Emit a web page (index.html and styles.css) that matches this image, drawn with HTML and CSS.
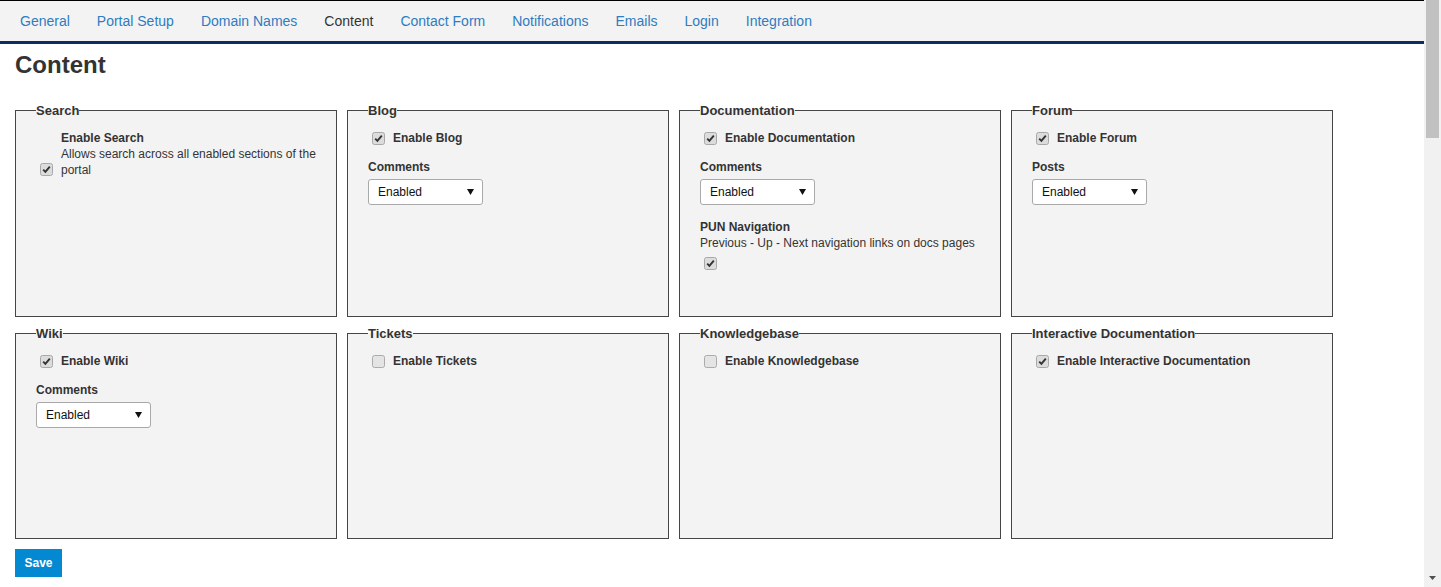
FILE: index.html
```html
<!DOCTYPE html>
<html lang="en">
<head>
<meta charset="utf-8">
<title>Content settings</title>
<link rel="stylesheet" href="styles.css">
</head>
<body>
<div class="screen">
  <div class="page">
    <nav class="tabs">
      <a class="tab">General</a>
      <a class="tab">Portal Setup</a>
      <a class="tab">Domain Names</a>
      <a class="tab active">Content</a>
      <a class="tab">Contact Form</a>
      <a class="tab">Notifications</a>
      <a class="tab">Emails</a>
      <a class="tab">Login</a>
      <a class="tab">Integration</a>
    </nav>
    <h1 class="title">Content</h1>
    <div class="grid">
      <fieldset class="box">
        <legend>Search</legend>
        <div class="row bottom">
          <svg class="cb" width="13" height="13" viewBox="0 0 13 13"><rect x="0.5" y="0.5" width="12" height="12" rx="2" fill="#dcdcdc" stroke="#a8a8a8"/><path d="M3.2 6.6 L5.4 8.9 L9.8 3.6" fill="none" stroke="#333" stroke-width="1.9"/></svg>
          <div class="lbl">
            <div class="strong">Enable Search</div>
            <div>Allows search across all enabled sections of the portal</div>
          </div>
        </div>
      </fieldset>
      <fieldset class="box">
        <legend>Blog</legend>
        <div class="row">
          <svg class="cb" width="13" height="13" viewBox="0 0 13 13"><rect x="0.5" y="0.5" width="12" height="12" rx="2" fill="#dcdcdc" stroke="#a8a8a8"/><path d="M3.2 6.6 L5.4 8.9 L9.8 3.6" fill="none" stroke="#333" stroke-width="1.9"/></svg>
          <span class="lbl strong">Enable Blog</span>
        </div>
        <div class="field-label">Comments</div>
        <div class="select"><span>Enabled</span><svg class="arrow" width="7" height="6" viewBox="0 0 7 6"><path d="M0 0 H7 L3.5 6 Z" fill="#111"/></svg></div>
      </fieldset>
      <fieldset class="box">
        <legend>Documentation</legend>
        <div class="row">
          <svg class="cb" width="13" height="13" viewBox="0 0 13 13"><rect x="0.5" y="0.5" width="12" height="12" rx="2" fill="#dcdcdc" stroke="#a8a8a8"/><path d="M3.2 6.6 L5.4 8.9 L9.8 3.6" fill="none" stroke="#333" stroke-width="1.9"/></svg>
          <span class="lbl strong">Enable Documentation</span>
        </div>
        <div class="field-label">Comments</div>
        <div class="select"><span>Enabled</span><svg class="arrow" width="7" height="6" viewBox="0 0 7 6"><path d="M0 0 H7 L3.5 6 Z" fill="#111"/></svg></div>
        <div class="field-label pun">PUN Navigation</div>
        <div>Previous - Up - Next navigation links on docs pages</div>
        <svg class="cb block" width="13" height="13" viewBox="0 0 13 13"><rect x="0.5" y="0.5" width="12" height="12" rx="2" fill="#dcdcdc" stroke="#a8a8a8"/><path d="M3.2 6.6 L5.4 8.9 L9.8 3.6" fill="none" stroke="#333" stroke-width="1.9"/></svg>
      </fieldset>
      <fieldset class="box">
        <legend>Forum</legend>
        <div class="row">
          <svg class="cb" width="13" height="13" viewBox="0 0 13 13"><rect x="0.5" y="0.5" width="12" height="12" rx="2" fill="#dcdcdc" stroke="#a8a8a8"/><path d="M3.2 6.6 L5.4 8.9 L9.8 3.6" fill="none" stroke="#333" stroke-width="1.9"/></svg>
          <span class="lbl strong">Enable Forum</span>
        </div>
        <div class="field-label">Posts</div>
        <div class="select"><span>Enabled</span><svg class="arrow" width="7" height="6" viewBox="0 0 7 6"><path d="M0 0 H7 L3.5 6 Z" fill="#111"/></svg></div>
      </fieldset>
      <fieldset class="box">
        <legend>Wiki</legend>
        <div class="row">
          <svg class="cb" width="13" height="13" viewBox="0 0 13 13"><rect x="0.5" y="0.5" width="12" height="12" rx="2" fill="#dcdcdc" stroke="#a8a8a8"/><path d="M3.2 6.6 L5.4 8.9 L9.8 3.6" fill="none" stroke="#333" stroke-width="1.9"/></svg>
          <span class="lbl strong">Enable Wiki</span>
        </div>
        <div class="field-label">Comments</div>
        <div class="select"><span>Enabled</span><svg class="arrow" width="7" height="6" viewBox="0 0 7 6"><path d="M0 0 H7 L3.5 6 Z" fill="#111"/></svg></div>
      </fieldset>
      <fieldset class="box">
        <legend>Tickets</legend>
        <div class="row">
          <svg class="cb" width="13" height="13" viewBox="0 0 13 13"><rect x="0.5" y="0.5" width="12" height="12" rx="2" fill="#e4e4e4" stroke="#ababab"/></svg>
          <span class="lbl strong">Enable Tickets</span>
        </div>
      </fieldset>
      <fieldset class="box">
        <legend>Knowledgebase</legend>
        <div class="row">
          <svg class="cb" width="13" height="13" viewBox="0 0 13 13"><rect x="0.5" y="0.5" width="12" height="12" rx="2" fill="#e4e4e4" stroke="#ababab"/></svg>
          <span class="lbl strong">Enable Knowledgebase</span>
        </div>
      </fieldset>
      <fieldset class="box">
        <legend>Interactive Documentation</legend>
        <div class="row">
          <svg class="cb" width="13" height="13" viewBox="0 0 13 13"><rect x="0.5" y="0.5" width="12" height="12" rx="2" fill="#dcdcdc" stroke="#a8a8a8"/><path d="M3.2 6.6 L5.4 8.9 L9.8 3.6" fill="none" stroke="#333" stroke-width="1.9"/></svg>
          <span class="lbl strong">Enable Interactive Documentation</span>
        </div>
      </fieldset>
    </div>
    <button class="save" type="button">Save</button>
  </div>
  <div class="scrollbar">
    <div class="thumb"></div>
    <div class="track"></div>
    <svg class="down" width="7" height="4" viewBox="0 0 7 4"><path d="M0 0 H7 L3.5 4 Z" fill="#505050"/></svg>
  </div>
</div>
</body>
</html>
```

FILE: styles.css
```css
html, body {
  margin: 0;
  padding: 0;
  background: #fff;
}

body {
  font-family: "Liberation Sans", Arial, sans-serif;
  color: #333;
  font-size: 12px;
  line-height: 16px;
}

.screen {
  display: flex;
  width: 1441px;
  height: 587px;
  overflow: hidden;
}

.page {
  width: 1424px;
  flex: none;
}

.tabs {
  display: flex;
  height: 40px;
  background: #f3f3f3;
  border-top: 1px solid #000;
  border-bottom: 3px solid #0d2c63;
  padding-left: 6.5px;
}

.tab {
  padding: 0 13.5px;
  font-size: 14px;
  line-height: 40px;
  color: #2f7cc0;
  text-decoration: none;
}

.tab.active {
  color: #333;
}

.title {
  margin: 8px 0 0 15px;
  font-size: 24px;
  line-height: 26px;
  font-weight: bold;
  color: #333;
}

.grid {
  display: grid;
  grid-template-columns: repeat(4, 322px);
  grid-template-rows: 214px 213px;
  column-gap: 10px;
  row-gap: 9px;
  margin: 25px 0 0 15px;
}

.box {
  margin: 0;
  min-width: 0;
  border: 1px solid #454545;
  background: #f3f3f3;
  padding: 12px 20px 0 20px;
  box-sizing: border-box;
}

.box legend {
  padding: 0;
  font-size: 13px;
  line-height: 15px;
  font-weight: bold;
  color: #333;
}

.row {
  display: flex;
  align-items: center;
}

.row.bottom {
  align-items: flex-end;
}

.row.bottom .cb {
  margin-bottom: 2px;
}

.cb {
  flex: none;
  margin: 0 3px 0 4px;
}

.cb.block {
  display: block;
  margin-top: 6px;
}

.lbl {
  margin-left: 5px;
}

.strong {
  font-weight: bold;
}

.field-label {
  font-weight: bold;
  margin-top: 13px;
}

.field-label.pun {
  margin-top: 14px;
}

.select {
  display: flex;
  align-items: center;
  justify-content: space-between;
  width: 115px;
  height: 26px;
  box-sizing: border-box;
  margin-top: 4px;
  padding: 0 8px 0 9px;
  border: 1px solid #a9a9a9;
  border-radius: 3px;
  background: #fff;
  color: #111;
}

.save {
  display: block;
  margin: 10px 0 0 15px;
  width: 47px;
  height: 28px;
  padding: 0;
  border: 0;
  background: #0388d2;
  color: #fff;
  font-family: "Liberation Sans", Arial, sans-serif;
  font-size: 12px;
  font-weight: bold;
}

.scrollbar {
  width: 17px;
  flex: none;
  display: flex;
  flex-direction: column;
  align-items: center;
  background: #f1f1f1;
}

.thumb {
  width: 13px;
  height: 138px;
  margin-left: 2px;
  align-self: flex-start;
  background: #c1c1c1;
}

.track {
  flex: 1;
}

.down {
  margin-bottom: 7px;
}
```
